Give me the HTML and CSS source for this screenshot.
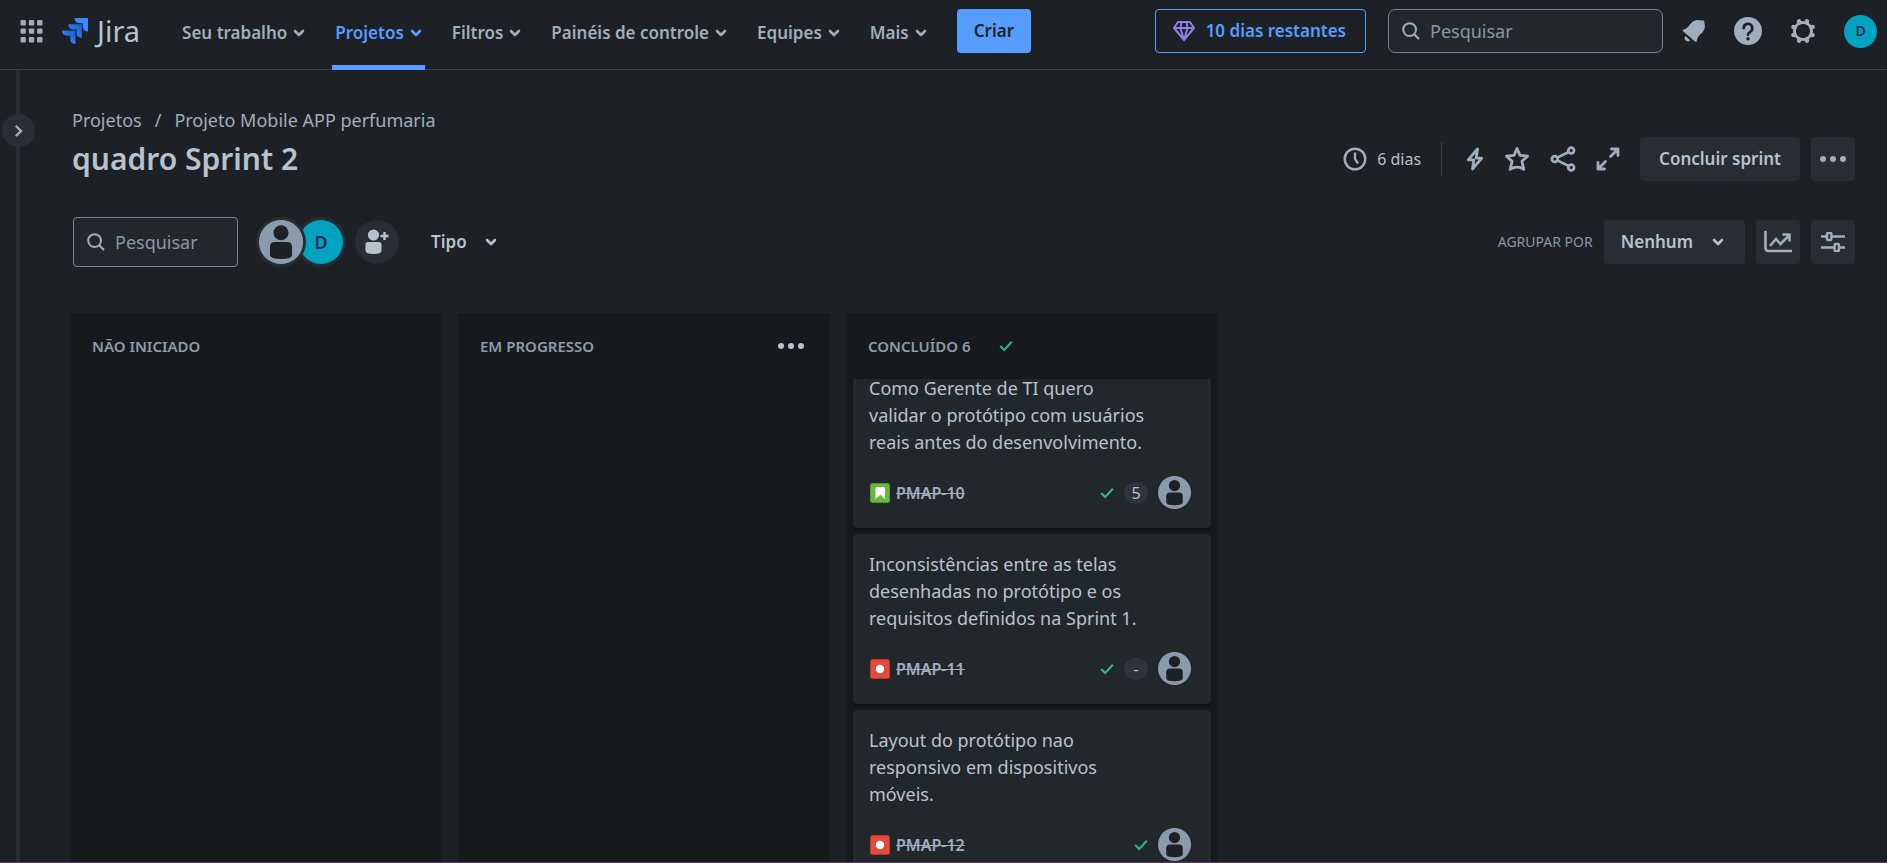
FILE: index.html
```html
<!DOCTYPE html>
<html lang="pt-BR">
<head>
<meta charset="utf-8">
<title>quadro Sprint 2 - Jira</title>
<link rel="stylesheet" href="styles.css">
</head>
<body>
<svg class="defs" aria-hidden="true">
  <symbol id="chevron" viewBox="0 0 12 8"><path d="M2 2l4 4 4-4" fill="none" stroke="currentColor" stroke-width="2.6" stroke-linecap="round" stroke-linejoin="round"/></symbol>
  <symbol id="search" viewBox="0 0 18 18"><circle cx="7.600" cy="7.600" r="6.400" fill="none" stroke="currentColor" stroke-width="2"/><path d="M12 12l5 5" stroke="currentColor" stroke-width="2.200"/></symbol>
  <symbol id="check" viewBox="0 0 14 12"><path d="M1.200 6l4 4L12.800 1.800" fill="none" stroke="currentColor" stroke-width="2"/></symbol>
  <symbol id="dots" viewBox="0 0 26 6"><circle cx="3" cy="3" r="3"/><circle cx="13" cy="3" r="3"/><circle cx="23" cy="3" r="3"/></symbol>
  <symbol id="person" viewBox="0 0 44 44"><circle cx="22" cy="22" r="22" fill="#8c9bab"/><circle cx="22" cy="12.700" r="7.500" fill="#1d2125"/><path d="M11 27q0-5 5-5h12q5 0 5 5v8q0 4-11 4t-11-4z" fill="#1d2125"/></symbol>
  <symbol id="bug" viewBox="0 0 20 20"><rect width="20" height="20" rx="2.500" fill="#b53c2c"/><rect x="1" y="1" width="18" height="18" rx="1.500" fill="#e5493a"/><circle cx="10" cy="10" r="4.200" fill="#fff"/></symbol>
  <symbol id="story" viewBox="0 0 20 20"><rect width="20" height="20" rx="2.500" fill="#4f9a31"/><rect x="1" y="1" width="18" height="18" rx="1.500" fill="#63ba3c"/><path d="M5.500 5.500q0-1.500 1.500-1.500h6.500q1.500 0 1.500 1.500V16l-4.700-4.200L5.500 16z" fill="#fff"/></symbol>
</svg>

<header class="topbar">
  <button class="icon-btn" aria-label="Alternar para"><svg width="23" height="23" viewBox="0 0 22 23" fill="currentColor"><rect width="5.400" height="5.400" rx="1.200"/><rect x="8.300" width="5.400" height="5.400" rx="1.200"/><rect x="16.600" width="5.400" height="5.400" rx="1.200"/><rect y="8.400" width="5.400" height="5.400" rx="1.200"/><rect x="8.300" y="8.400" width="5.400" height="5.400" rx="1.200"/><rect x="16.600" y="8.400" width="5.400" height="5.400" rx="1.200"/><rect y="17" width="5.400" height="5.400" rx="1.200"/><rect x="8.300" y="17" width="5.400" height="5.400" rx="1.200"/><rect x="16.600" y="17" width="5.400" height="5.400" rx="1.200"/></svg></button>
  <a class="logo" href="#">
    <svg width="26" height="26" viewBox="0 0 26 26"><defs><linearGradient id="lg" x1="1" y1="0" x2="0" y2="1"><stop offset=".2" stop-color="#1f65d6"/><stop offset=".8" stop-color="#388bff"/></linearGradient></defs><path d="M12.500 0H26v13.500c-3.400 0-5.200-2.300-5.200-5V5.200h-3.200c-2.800 0-5.100-2-5.100-5.200z" fill="#388bff"/><path d="M6.300 6.300h13.500v13.500c-3.400 0-5.200-2.300-5.200-5v-3.300h-3.200c-2.800 0-5.100-2-5.100-5.200z" fill="url(#lg)"/><path d="M0 12.500h13.500V26c-3.400 0-5.200-2.300-5.200-5v-3.300H5.100C2.300 17.700 0 15.700 0 12.500z" fill="url(#lg)"/></svg>
    <span>Jira</span>
  </a>
  <nav class="nav">
    <button>Seu trabalho<svg class="chev"><use href="#chevron"/></svg></button>
    <button class="active">Projetos<svg class="chev"><use href="#chevron"/></svg></button>
    <button>Filtros<svg class="chev"><use href="#chevron"/></svg></button>
    <button>Painéis de controle<svg class="chev"><use href="#chevron"/></svg></button>
    <button>Equipes<svg class="chev"><use href="#chevron"/></svg></button>
    <button>Mais<svg class="chev"><use href="#chevron"/></svg></button>
  </nav>
  <button class="create">Criar</button>
  <div class="tools">
    <button class="trial"><svg width="22" height="20" viewBox="0 0 22 20" fill="none" stroke="#8f7ee7" stroke-width="2" stroke-linejoin="round"><path d="M5 1h12l4 6-10 12L1 7zM1 7h20M7.500 7L11 19l3.500-12M8.500 1l-1 6M13.500 1l1 6"/></svg>10 dias restantes</button>
    <label class="field global"><svg width="18" height="18"><use href="#search"/></svg><input type="text" aria-label="Pesquisar" placeholder="Pesquisar"></label>
    <button class="icon-btn" aria-label="Notificações"><svg width="24" height="24" viewBox="0 0 24 24" fill="currentColor"><path d="M1 12.200c-.6-.6-.4-1.300.4-1.500 3.300-1 5.200-3 7-5.600C11 1.500 15 .2 19.600 1.700c.6-1.200 3.400 0 2.700 1.700 1.400 4.500.2 8.300-3 11.200-2.400 2-4 3.900-4.600 7.300-.2 1-1 1.200-1.700.5z"/><path d="M3.500 17a3.100 3.100 0 0 0 4.600 4.200z"/></svg></button>
    <button class="icon-btn" aria-label="Ajuda"><svg width="28" height="28" viewBox="0 0 28 28"><circle cx="14" cy="14" r="14" fill="currentColor"/><path d="M9.700 11.200a4.300 4.300 0 1 1 6.500 3.600c-1.500.9-2.200 1.500-2.200 3" fill="none" stroke="#1d2125" stroke-width="2.600" stroke-linecap="round"/><circle cx="14" cy="21.800" r="1.700" fill="#1d2125"/></svg></button>
    <button class="icon-btn" aria-label="Configurações"><svg width="26" height="26" viewBox="0 0 26 26"><circle cx="13" cy="13" r="8.500" fill="none" stroke="currentColor" stroke-width="3"/><g stroke="currentColor" stroke-width="4.400" stroke-linecap="round" transform="rotate(22.500 13 13)"><path d="M13 2.600v2M13 21.400v2M2.600 13h2M21.400 13h2M5.600 5.600l1.400 1.400M19 19l1.400 1.400M5.600 20.400L7 19M19 7l1.400-1.400"/></g><circle cx="13" cy="13" r="7" fill="#1d2125"/></svg></button>
    <button class="avatar me" aria-label="Perfil">D</button>
  </div>
</header>

<div class="body">
  <aside class="rail"><button class="expand" aria-label="Expandir barra lateral"><svg width="8" height="12" viewBox="0 0 8 12"><path d="M1.500 1.500L6 6l-4.500 4.500" fill="none" stroke="currentColor" stroke-width="2.400" stroke-linecap="round"/></svg></button></aside>
  <main class="main">
    <nav class="crumbs"><a href="#">Projetos</a><span>/</span><a href="#">Projeto Mobile APP perfumaria</a></nav>
    <div class="title-row">
      <h1>quadro Sprint 2</h1>
      <div class="actions">
        <span class="days"><svg width="24" height="24" viewBox="0 0 24 24" fill="none" stroke="currentColor" stroke-width="2.400"><circle cx="12" cy="12" r="10.300"/><path d="M12 5.500v6.500l3 4.500"/></svg>6 dias</span>
        <span class="sep"></span>
        <button class="icon-btn" aria-label="Automação"><svg width="18" height="24" viewBox="0 0 18 24" fill="none" stroke="currentColor" stroke-width="2.800" stroke-linejoin="round"><path d="M11.500 2L2.200 12.800h5.600L6.500 22l9.300-10.800h-5.600z"/></svg></button>
        <button class="icon-btn" aria-label="Favorito"><svg width="26" height="26" viewBox="0 0 26 26" fill="none" stroke="currentColor" stroke-width="2.800" stroke-linejoin="round"><path d="M13 2.500l3 6.900 7.500.7-5.600 5.100 1.900 8.200q-3.300-2.200-6.800-2.200t-6.800 2.200l1.900-8.200-5.600-5.100 7.500-.7z"/></svg></button>
        <button class="icon-btn" aria-label="Compartilhar"><svg width="26" height="26" viewBox="0 0 26 26" fill="none" stroke="currentColor" stroke-width="2.700"><circle cx="4.800" cy="13" r="2.900"/><circle cx="21.200" cy="4.500" r="2.900"/><circle cx="21.200" cy="21.500" r="2.900"/><path d="M7.300 11.600L18.700 6M7.300 14.400L18.700 20"/></svg></button>
        <button class="icon-btn" aria-label="Tela cheia"><svg width="24" height="24" viewBox="0 0 24 24" fill="none" stroke="currentColor" stroke-width="2.800" stroke-linecap="round" stroke-linejoin="round"><path d="M15.500 2H22v6.500M22 2l-7.500 7.500M8.500 22H2v-6.500M2 22l7.500-7.500"/></svg></button>
        <button class="btn complete">Concluir sprint</button>
        <button class="btn square" aria-label="Mais ações"><svg width="26" height="6" fill="currentColor"><use href="#dots"/></svg></button>
      </div>
    </div>
    <div class="filter-row">
      <label class="field board-search"><svg width="18" height="18"><use href="#search"/></svg><input type="text" aria-label="Pesquisar no quadro" placeholder="Pesquisar"></label>
      <div class="people">
        <button class="avatar none" aria-label="Não atribuído"><svg width="44" height="44"><use href="#person"/></svg></button>
        <button class="avatar d" aria-label="Filtrar por D">D</button>
        <button class="add" aria-label="Adicionar pessoas"><svg width="24" height="26" viewBox="0 0 24 26" fill="currentColor"><circle cx="8.500" cy="6" r="5.600"/><path d="M.5 15.500q0-2.500 2.500-2.500h11q2.500 0 2.500 2.500v6q0 3.500-8 3.500t-8-3.500z"/><path d="M19.500 3v8M15.500 7h8" stroke="currentColor" stroke-width="2.400"/></svg></button>
      </div>
      <button class="type">Tipo<svg class="chev"><use href="#chevron"/></svg></button>
      <div class="view">
        <span class="group-label">AGRUPAR POR</span>
        <button class="btn group">Nenhum<svg class="chev"><use href="#chevron"/></svg></button>
        <button class="btn square" aria-label="Insights"><svg width="28" height="22" viewBox="0 0 28 22" fill="none" stroke="currentColor" stroke-width="2.600"><path d="M1.500 0v17q0 3 3 3H28M6 15l6-7 4.500 5L25 4.500M18.500 3.500H25.500V10.500"/></svg></button>
        <button class="btn square" aria-label="Configurações de exibição"><svg width="24" height="20" viewBox="0 0 24 20" fill="none" stroke="currentColor" stroke-width="2.400"><path d="M0 4.500h5.500M11 4.500h13M0 15.500h13M18.500 15.500H24"/><rect x="6" y="1" width="4.400" height="7" rx="1"/><rect x="13.600" y="12" width="4.400" height="7" rx="1"/></svg></button>
      </div>
    </div>

    <div class="board">
      <section class="column"><header class="col-head"><h2>NÃO INICIADO</h2></header></section>
      <section class="column"><header class="col-head"><h2>EM PROGRESSO</h2><button class="col-more" aria-label="Ações da coluna"><svg width="26" height="6" fill="currentColor"><use href="#dots"/></svg></button></header></section>
      <section class="column"><header class="col-head"><h2>CONCLUÍDO 6</h2><svg class="check" width="14" height="12"><use href="#check"/></svg></header>
        <div class="cards">
          <article class="card scrolled">
            <p>Como Gerente de TI quero validar o protótipo com usuários reais antes do desenvolvimento.</p>
            <footer><svg width="20" height="20"><use href="#story"/></svg><a href="#">PMAP-10</a><span class="meta"><svg class="check" width="14" height="12"><use href="#check"/></svg><span class="points">5</span><svg width="33" height="33"><use href="#person"/></svg></span></footer>
          </article>
          <article class="card">
            <p>Inconsistências entre as telas desenhadas no protótipo e os requisitos definidos na Sprint 1.</p>
            <footer><svg width="20" height="20"><use href="#bug"/></svg><a href="#">PMAP-11</a><span class="meta"><svg class="check" width="14" height="12"><use href="#check"/></svg><span class="points">-</span><svg width="33" height="33"><use href="#person"/></svg></span></footer>
          </article>
          <article class="card">
            <p>Layout do protótipo nao responsivo em dispositivos móveis.</p>
            <footer><svg width="20" height="20"><use href="#bug"/></svg><a href="#">PMAP-12</a><span class="meta"><svg class="check" width="14" height="12"><use href="#check"/></svg><svg width="33" height="33"><use href="#person"/></svg></span></footer>
          </article>
        </div>
      </section>
    </div>
  </main>
</div>
</body>
</html>
```

FILE: styles.css
```css
* { box-sizing: border-box; }

body {
  margin: 0;
  height: 100vh;
  display: flex;
  flex-direction: column;
  overflow: hidden;
  background: #1d2125;
  border-bottom: 1px solid #5a3a5c;
  color: #9fadbc;
  font-family: "Noto Sans", "Open Sans", sans-serif;
  font-size: 18px;
  line-height: 28px;
}

button, input {
  font: inherit;
  color: inherit;
  background: none;
  border: 0;
  padding: 0;
  margin: 0;
}

button { cursor: pointer; display: flex; align-items: center; justify-content: center; }
a { color: inherit; text-decoration: none; }
svg { display: block; flex: none; }
.defs { position: absolute; width: 0; height: 0; }
.chev { width: 12px; height: 8px; }

/* Top bar */
.topbar {
  flex: none;
  height: 70px;
  display: flex;
  align-items: stretch;
  padding: 0 10px 0 20px;
  border-bottom: 1px solid #38414a;
}
.topbar > * { height: 62px; }
.topbar > .nav { height: 70px; }
.logo { display: flex; align-items: center; gap: 9px; margin-left: 19px; color: #b6c2cf; }
.logo span { font-size: 29px; }
.nav { display: flex; gap: 24px; margin-left: 39px; }
.nav button { gap: 6px; font-size: 17px; font-weight: 600; padding: 0 3px 5px; }
.nav .active { color: #579dff; box-shadow: inset 0 -5px #579dff; }
.topbar > .create {
  align-self: flex-start;
  height: 44px;
  margin: 9px 0 0 27px;
  padding: 0 17px;
  border-radius: 4px;
  background: #579dff;
  color: #1d2125;
  font-size: 17px;
  font-weight: 600;
}
.tools { display: flex; align-items: center; margin-left: auto; gap: 28px; }
.trial {
  height: 44px;
  padding: 0 19px 0 17px;
  gap: 11px;
  border: 1px solid #579dff;
  border-radius: 4px;
  color: #579dff;
  font-size: 17px;
  font-weight: 600;
}
.field {
  display: flex;
  align-items: center;
  gap: 10px;
  border: 1px solid #738496;
  background: #22272b;
  border-radius: 4px;
  padding: 0 13px;
}
.field input { flex: 1; min-width: 0; outline: 0; }
.field input::placeholder { color: #8696a7; opacity: 1; }
.global { width: 275px; height: 44px; border-radius: 7px; margin-left: -6px; margin-right: -9px; }
.avatar { border-radius: 50%; background: #00a3bf; color: #172b4d; font-weight: 600; }
.me { width: 33px; height: 33px; font-size: 14px; }

/* Page body */
.body { flex: 1; min-height: 0; display: flex; }
.rail { flex: none; width: 20px; border-right: 4px solid #282d33; }
.expand {
  position: relative;
  width: 33px;
  height: 33px;
  margin: 44px 0 0 2px;
  border-radius: 50%;
  background: #282d36;
}
.main { flex: 1; min-width: 0; display: flex; flex-direction: column; padding: 36px 32px 0 50px; }
.crumbs { display: flex; gap: 13px; margin-left: 2px; }
.title-row { display: flex; align-items: center; justify-content: space-between; height: 50px; margin-left: 2px; }
h1 { margin: 0; font-size: 30px; line-height: 40px; font-weight: 600; color: #b6c2cf; }
.actions { display: flex; align-items: center; gap: 20px; }
.days { display: flex; align-items: center; gap: 10px; font-size: 16px; color: #b6c2cf; }
.days svg { color: #9fadbc; }
.sep { width: 1px; height: 34px; background: #38414a; margin-right: 4px; }
.btn {
  height: 44px;
  padding: 0 17px;
  border-radius: 4px;
  background: #282d33;
  color: #b6c2cf;
  font-size: 17px;
  font-weight: 600;
}
.complete { padding: 0 19px; }
.square { width: 44px; padding: 0; color: #9fadbc; }
.actions .square { margin-left: -9px; }
.filter-row { display: flex; align-items: center; height: 50px; margin: 33px 0 46px 3px; }
.board-search { width: 165px; height: 50px; }
.people { display: flex; align-items: center; margin-left: 21px; }
.people .avatar { width: 44px; height: 44px; box-shadow: 0 0 0 3px #282d33; }
.people .none { position: relative; z-index: 1; }
.people .d { margin-left: -4px; }
.add { width: 44px; height: 44px; border-radius: 50%; margin-left: 12px; background: #282d33; color: #b6c2cf; }
.type { gap: 18px; margin-left: 32px; color: #b6c2cf; font-size: 17px; font-weight: 600; }
.view { display: flex; align-items: center; gap: 11px; margin-left: auto; }
.group-label { font-size: 14px; color: #8696a7; }
.group { gap: 19px; padding-right: 21px; }

/* Board */
.board {
  flex: 1;
  min-height: 0;
  display: grid;
  grid-template-columns: repeat(3, minmax(0, 372px));
  gap: 16px;
}
.column { display: flex; flex-direction: column; min-height: 0; background: #161a1d; }
.col-head { flex: none; display: flex; align-items: center; height: 66px; padding: 0 26px 0 22px; }
.col-head h2 { margin: 0; font-size: 15px; font-weight: 600; color: #8c9bab; }
.col-head .check { margin-left: 28px; }
.col-more { margin-left: auto; color: #b6c2cf; }
.check { color: #2abb7f; }
.cards { flex: 1; min-height: 0; overflow: hidden; display: flex; flex-direction: column; gap: 6px; padding: 0 7px; }
.card {
  flex: none;
  padding: 17px 16px 19px;
  border-radius: 4px;
  background: #22272b;
  box-shadow: 0 2px 2px #0d1012;
  color: #b6c2cf;
}
.scrolled { margin-top: -21px; }
.card p { margin: 0 46px 0 0; line-height: 27px; }
.card footer { display: flex; align-items: center; gap: 6px; margin-top: 20px; padding-left: 1px; color: #9fadbc; }
.card a { font-size: 16px; font-weight: 600; text-decoration: line-through; }
.meta { display: flex; align-items: center; gap: 10px; margin-left: auto; padding-right: 4px; }
.points { min-width: 24px; height: 22px; border-radius: 11px; background: #2c333a; text-align: center; font-size: 16px; line-height: 22px; color: #b6c2cf; }
```
